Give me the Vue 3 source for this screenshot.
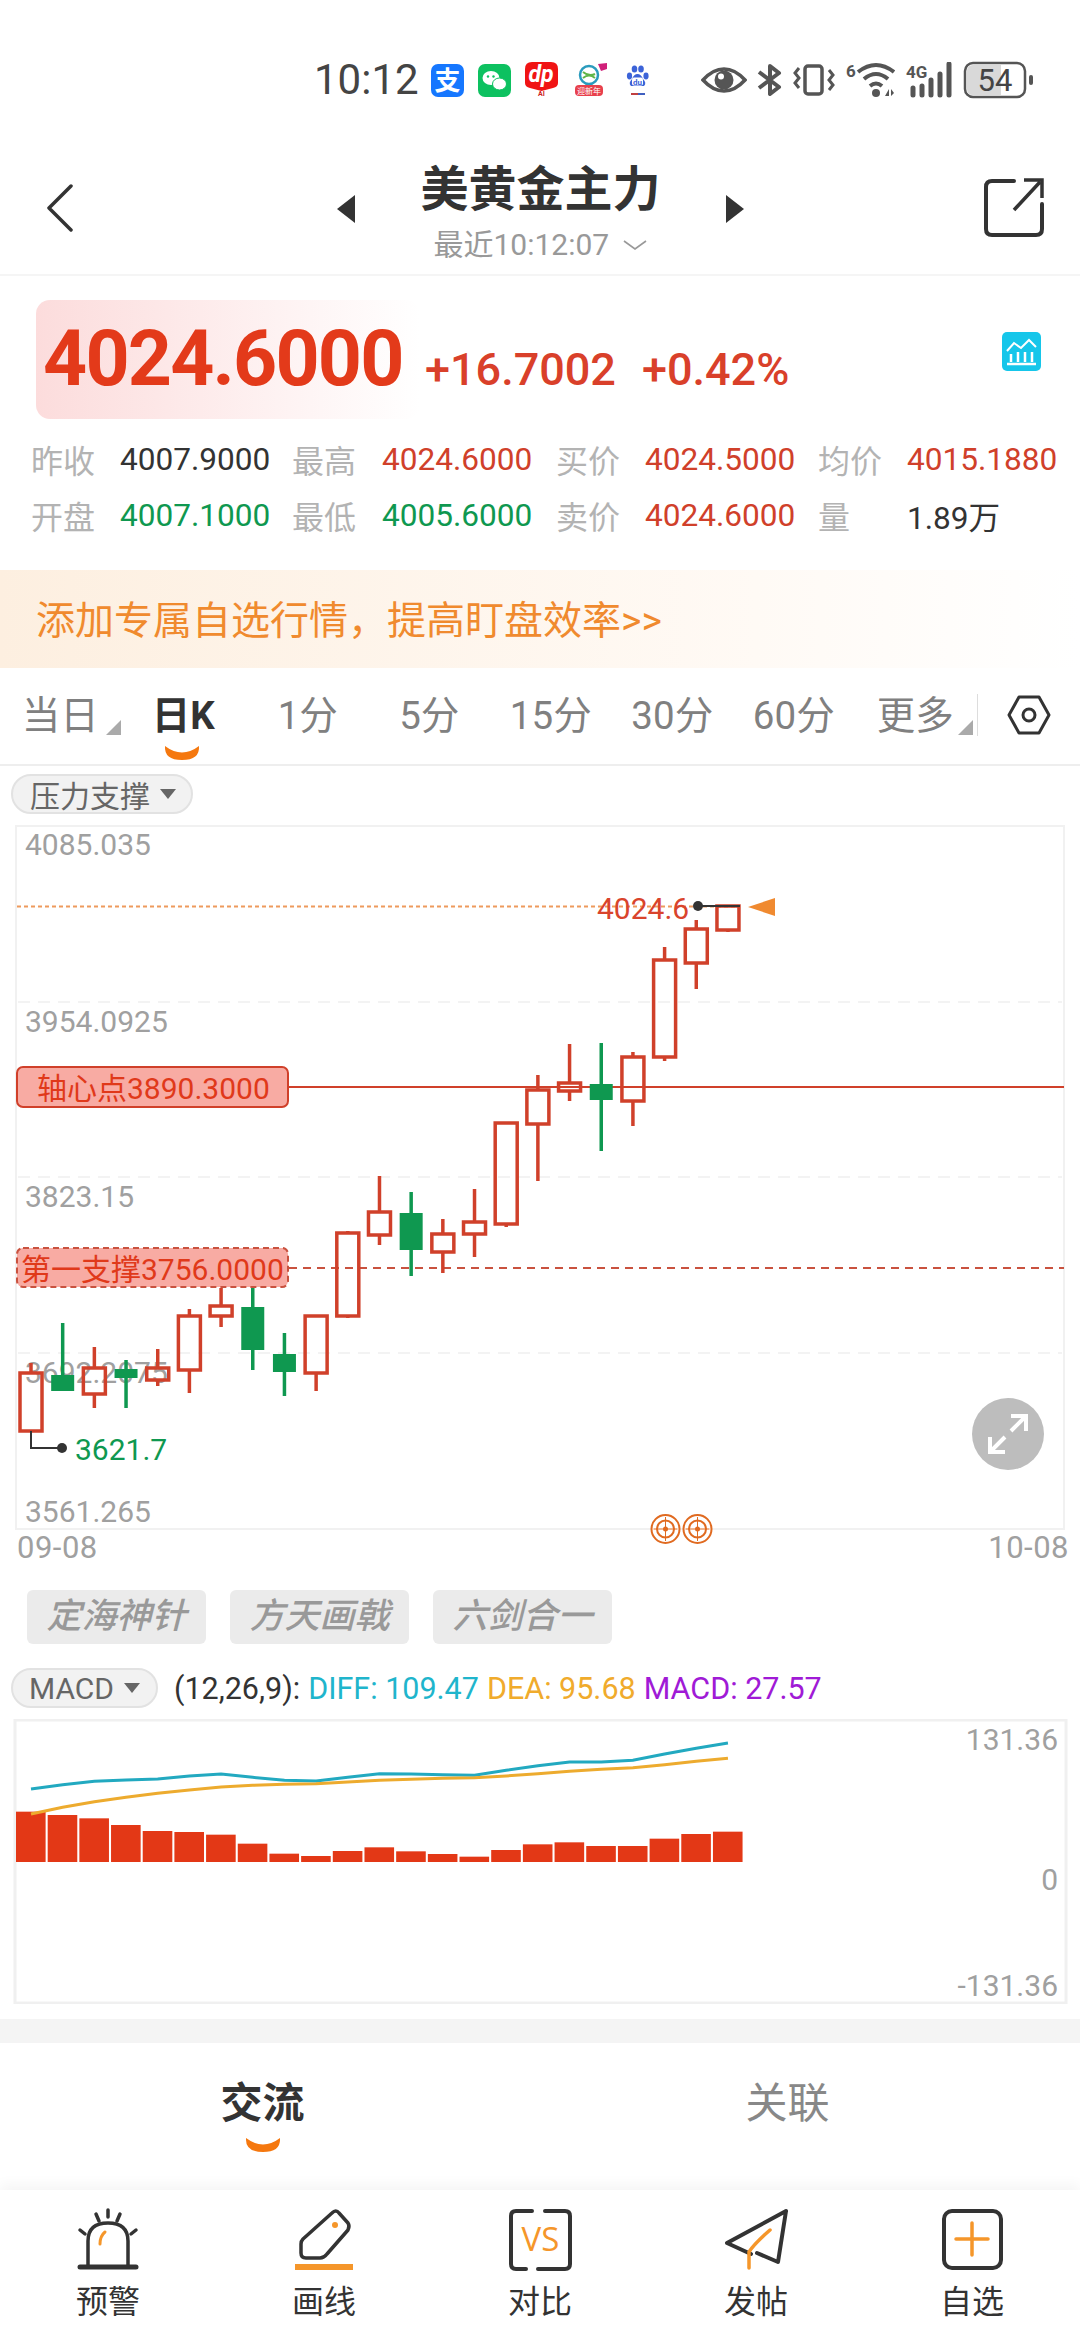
<template>
  <div class="page">
    <!-- status bar -->
    <div class="status">
      <span class="time">10:12</span>
      <svg class="app" width="33" height="33" viewBox="0 0 33 33">
        <rect width="33" height="33" rx="7" fill="#1677ff" />
        <text x="16.5" y="26" text-anchor="middle" font-size="26" font-weight="700" fill="#fff">支</text>
      </svg>
      <svg class="app app-gap" width="33" height="33" viewBox="0 0 33 33">
        <rect width="33" height="33" rx="7" fill="#0dc160" />
        <ellipse cx="13" cy="14" rx="8.5" ry="7" fill="#fff" />
        <ellipse cx="21.5" cy="20" rx="7" ry="6" fill="#fff" stroke="#0dc160" />
        <circle cx="10" cy="12.5" r="1.2" fill="#0dc160" />
        <circle cx="15.5" cy="12.5" r="1.2" fill="#0dc160" />
      </svg>
      <svg class="app app-gap" width="33" height="36" viewBox="0 0 33 36">
        <path d="M7 0H26Q33 0 33 7V21Q33 25 28 26L16.5 29L5 26Q0 25 0 21V7Q0 0 7 0Z" fill="#f01414" />
        <text x="16" y="20" text-anchor="middle" font-size="23" font-weight="700" font-style="italic" fill="#fff">dp</text>
        <text x="16.5" y="34" text-anchor="middle" font-size="7" font-weight="700" fill="#c22">AI</text>
      </svg>
      <svg class="app app-gap" width="36" height="34" viewBox="0 0 36 34">
        <circle cx="17" cy="12" r="9" fill="none" stroke="#2a9bbd" stroke-width="2.5" />
        <path d="M11 9Q17 14 23 11M11 15Q17 10 23 15" fill="none" stroke="#5fb548" stroke-width="2" />
        <path d="M26 1L35 0V6L29 8Z" fill="#d0207a" />
        <rect x="3" y="22" width="28" height="11" rx="4" fill="#e8404c" />
        <text x="17" y="31" text-anchor="middle" font-size="8" fill="#fff">迎新年</text>
      </svg>
      <svg class="app baidu" width="23" height="34" viewBox="0 0 23 34">
        <ellipse cx="3.5" cy="13" rx="2.6" ry="3.4" fill="#3c63d8" />
        <ellipse cx="8.5" cy="6" rx="2.8" ry="3.6" fill="#3c63d8" />
        <ellipse cx="15" cy="6" rx="2.8" ry="3.6" fill="#3c63d8" />
        <ellipse cx="20" cy="13" rx="2.6" ry="3.4" fill="#3c63d8" />
        <path d="M11.5 11Q15 11 17 16Q21 20 18 23H5Q2 20 6 16Q8 11 11.5 11Z" fill="#3c63d8" />
        <rect x="6" y="14.5" width="11" height="8" rx="2" fill="#fff" />
        <text x="11.5" y="21.5" text-anchor="middle" font-size="8" font-weight="700" fill="#3c63d8">du</text>
        <rect x="5" y="30" width="7" height="2" fill="#c04040" />
        <rect x="12" y="30" width="7" height="2" fill="#4060c0" />
      </svg>
      <div class="status-right">
        <svg width="46" height="26" viewBox="0 0 46 26">
          <path d="M2 13Q12 2 23 2T44 13Q34 24 23 24T2 13Z" fill="none" stroke="#555" stroke-width="3.5" />
          <circle cx="23" cy="13" r="9.5" fill="#555" />
          <circle cx="20" cy="9.5" r="3" fill="#fff" />
        </svg>
        <svg width="26" height="32" viewBox="0 0 26 32">
          <path d="M2 8L22 23L13 30V2L22 9L2 24" fill="none" stroke="#555" stroke-width="4" stroke-linejoin="round" />
        </svg>
        <svg width="42" height="32" viewBox="0 0 42 32">
          <rect x="12" y="2" width="17" height="28" rx="3" fill="none" stroke="#555" stroke-width="3.5" />
          <path d="M6 4L2 9L6 14L2 19L6 24M36 6L40 11L36 16L40 21L36 26" fill="none" stroke="#555" stroke-width="3" />
        </svg>
        <svg width="50" height="36" viewBox="0 0 50 36">
          <text x="1" y="15" font-size="17" font-weight="700" fill="#555">6</text>
          <path d="M13 10Q31 -4 49 10M19 17Q31 7 43 17M25 24Q31 19 37 24" fill="none" stroke="#555" stroke-width="4" />
          <circle cx="31" cy="31" r="4" fill="#555" />
          <path d="M40 34L44 27V34ZM46 27L49 31L46 34Z" fill="#555" />
        </svg>
        <svg width="48" height="36" viewBox="0 0 48 36">
          <text x="1" y="16" font-size="17" font-weight="700" fill="#555">4G</text>
          <path d="M8 26V33M17 24V33M26 18V33M35 12V33M44 2V33" fill="none" stroke="#555" stroke-width="5" stroke-linecap="round" />
        </svg>
        <svg width="72" height="38" viewBox="0 0 72 38">
          <rect x="2" y="2" width="60" height="34" rx="8" fill="#fff" stroke="#555" stroke-width="2.5" />
          <path d="M4 10Q4 4 10 4H38V34H10Q4 34 4 28Z" fill="#d9d9d9" />
          <text x="32" y="30" text-anchor="middle" font-size="31" fill="#444">54</text>
          <rect x="66" y="14" width="4" height="10" rx="2" fill="#555" />
        </svg>
      </div>
    </div>

    <!-- title bar -->
    <div class="header">
      <svg class="back" width="28" height="48" viewBox="0 0 28 48">
        <path d="M25 2L3 24L25 46" fill="none" stroke="#333" stroke-width="3.5" stroke-linecap="round" stroke-linejoin="round" />
      </svg>
      <div class="head-center">
        <svg width="18" height="28" viewBox="0 0 18 28"><path d="M18 0V28L0 14Z" fill="#333" /></svg>
        <div class="head-title">
          <div class="title">美黄金主力</div>
          <div class="sub">最近10:12:07
            <svg width="24" height="10" viewBox="0 0 24 10"><path d="M1 1L12 9L23 1" fill="none" stroke="#999" stroke-width="1.6" /></svg>
          </div>
        </div>
        <svg width="18" height="28" viewBox="0 0 18 28"><path d="M0 0V28L18 14Z" fill="#333" /></svg>
      </div>
      <svg class="share" width="60" height="60" viewBox="0 0 60 60">
        <path d="M30 3H8Q2 3 2 9V51Q2 57 8 57H52Q58 57 58 51V26" fill="none" stroke="#333" stroke-width="4" stroke-linecap="round" />
        <path d="M30 32L56 4M40 2H58V20" fill="none" stroke="#333" stroke-width="3.5" />
      </svg>
    </div>

    <!-- quote -->
    <div class="quote">
      <div class="price-row">
        <div class="price-box">
          <span class="price">4024.6000</span>
        </div>
        <span class="chg chg1">+16.7002</span>
        <span class="chg chg2">+0.42%</span>
        <svg class="trend" width="39" height="39" viewBox="0 0 39 39">
          <rect width="39" height="39" rx="5" fill="#16c6ea" />
          <path d="M5 19L12 11L19 16L27 8L34 15" fill="none" stroke="#fff" stroke-width="2" />
          <path d="M9 22V30M16 20V30M23 20V30M30 20V30M5 32H34" fill="none" stroke="#fff" stroke-width="2.5" />
        </svg>
      </div>
      <div class="grid">
        <template v-for="item in quoteCells" :key="item.label">
          <span class="q-label">{{ item.label }}</span>
          <span class="q-val" :class="item.tone">{{ item.value }}</span>
        </template>
      </div>
    </div>

    <div class="banner">添加专属自选行情，提高盯盘效率&gt;&gt;</div>

    <!-- period tabs -->
    <div class="tabs">
      <div v-for="tab in periods" :key="tab.text" class="tab" :class="{ on: tab.on, first: tab.first }">
        {{ tab.text }}
        <i v-if="tab.menu" class="corner"></i>
        <svg v-if="tab.on" class="smile" width="36" height="14" viewBox="0 0 36 14">
          <path :d="smilePath" fill="#f5780f" />
        </svg>
      </div>
      <div class="tab-sep"></div>
      <svg class="hex" width="44" height="40" viewBox="0 0 44 40">
        <path d="M12 2H32L42 20L32 38H12L2 20Z" fill="none" stroke="#333" stroke-width="3" stroke-linejoin="round" />
        <circle cx="22" cy="20" r="6" fill="none" stroke="#333" stroke-width="3" />
      </svg>
    </div>

    <div class="pill-row">
      <div class="pill">压力支撑<i class="down"></i></div>
    </div>

    <!-- kline -->
    <svg class="kline" width="1080" height="704" viewBox="0 826 1080 704">
      <rect x="16" y="826" width="1048" height="703" fill="#fff" stroke="#f1f1f1" stroke-width="2" />
      <line v-for="y in [1002, 1177, 1353]" :key="y" x1="18" x2="1062" :y1="y" :y2="y" stroke="#f3f3f3" stroke-width="2" stroke-dasharray="12 8" />
      <text v-for="a in axisLabels" :key="a.text" x="25" :y="a.y" class="axis">{{ a.text }}</text>

      <line x1="17" x2="740" y1="906.5" y2="906.5" stroke="#ee9a5c" stroke-width="2" stroke-dasharray="4 3" />
      <line x1="289" x2="1064" y1="1087" y2="1087" stroke="#d0402a" stroke-width="2" />
      <line x1="289" x2="1064" y1="1268" y2="1268" stroke="#c9523f" stroke-width="2" stroke-dasharray="8 6" />

      <g v-for="c in candles" :key="c.x">
        <line :x1="c.x" :x2="c.x" :y1="c.high" :y2="c.top" :stroke="c.color" stroke-width="3.5" />
        <line :x1="c.x" :x2="c.x" :y1="c.bottom" :y2="c.low" :stroke="c.color" stroke-width="3.5" />
        <rect v-if="c.up" :x="c.x - 11" :y="c.top" width="22" :height="c.bottom - c.top" fill="none" :stroke="c.color" stroke-width="3.5" />
        <rect v-else :x="c.x - 11.5" :y="c.top" width="23" :height="c.bottom - c.top" :fill="c.color" />
      </g>

      <rect x="17" y="1067" width="271" height="40" rx="6" fill="#f8aba3" stroke="#d0402a" stroke-width="2" />
      <text x="37" y="1099" class="mark">轴心点3890.3000</text>
      <rect x="17" y="1248" width="271" height="39" rx="6" fill="#f8aba3" stroke="#c9523f" stroke-width="2" stroke-dasharray="6 4" />
      <text x="21" y="1280" class="mark">第一支撑3756.0000</text>

      <path d="M31 1431V1448H62" fill="none" stroke="#333" stroke-width="2" />
      <circle cx="62" cy="1448" r="5" fill="#333" />
      <text x="75" y="1460" class="low">3621.7</text>

      <text x="597" y="919" class="high">4024.6</text>
      <line x1="698" x2="740" y1="906" y2="906" stroke="#333" stroke-width="2" />
      <circle cx="698" cy="906" r="5" fill="#333" />
      <path d="M748 907L775 898V916Z" fill="#f08a30" />

      <g v-for="cx in [665.5, 697.5]" :key="cx" fill="#fff" stroke="#e06a20">
        <circle :cx="cx" cy="1529" r="14" stroke-width="2" />
        <circle :cx="cx" cy="1529" r="8.5" fill="none" stroke-width="2" />
        <circle :cx="cx" cy="1529" r="2.5" fill="#e06a20" stroke="none" />
        <path :d="`M${cx} 1517V1541M${cx - 12} 1529H${cx + 12}`" fill="none" stroke-width="1" />
      </g>

      <ellipse cx="1008" cy="1434" rx="36" ry="36" fill="#bdbdbd" />
      <path d="M1011 1431L1026 1416M1011 1416H1026V1431M1005 1437L990 1452M990 1437V1452H1005" fill="none" stroke="#fff" stroke-width="4" />
    </svg>

    <div class="dates">
      <span>09-08</span>
      <span>10-08</span>
    </div>

    <div class="tools">
      <div v-for="t in tools" :key="t" class="tool">{{ t }}</div>
    </div>

    <div class="macd-row">
      <div class="pill macd-pill">MACD<i class="down"></i></div>
      <span class="legend">
        <span class="lg-param">(12,26,9):</span>
        <span class="lg-diff">DIFF: 109.47</span>
        <span class="lg-dea">DEA: 95.68</span>
        <span class="lg-macd">MACD: 27.57</span>
      </span>
    </div>

    <svg class="macd" width="1080" height="285" viewBox="0 1719 1080 285">
      <rect x="15" y="1720" width="1051" height="283" fill="#fff" stroke="#f0f0f0" stroke-width="3" />
      <rect v-for="b in bars" :key="b.x" :x="b.x" :y="b.y" width="29.6" :height="1862 - b.y" fill="#e33816" />
      <polyline :points="diffPoints" fill="none" stroke="#22a9c0" stroke-width="3" />
      <polyline :points="deaPoints" fill="none" stroke="#edab2e" stroke-width="3" />
      <text x="1058" y="1750" text-anchor="end" class="axis">131.36</text>
      <text x="1058" y="1890" text-anchor="end" class="axis">0</text>
      <text x="1058" y="1996" text-anchor="end" class="axis">-131.36</text>
    </svg>

    <div class="strip"></div>

    <div class="sub-tabs">
      <div class="sub-tab on">
        交流
        <svg class="smile" width="36" height="14" viewBox="0 0 36 14">
          <path :d="smilePath" fill="#f5780f" />
        </svg>
      </div>
      <div class="sub-tab">关联</div>
    </div>

    <!-- bottom nav -->
    <div class="nav">
      <div class="nav-item">
        <svg width="64" height="64" viewBox="0 0 64 64">
          <path d="M12 58V33Q12 15 32 15T52 33V58" fill="none" stroke="#333" stroke-width="3.5" />
          <path d="M4 59H60" stroke="#333" stroke-width="5" stroke-linecap="round" />
          <path d="M32 2V9M20 6L23 13M44 6L41 13M4 22L9 26M60 22L55 26" fill="none" stroke="#333" stroke-width="3.5" stroke-linecap="round" />
          <path d="M24 36Q24 28 29 24" fill="none" stroke="#f5962a" stroke-width="3" stroke-linecap="round" />
        </svg>
        <span>预警</span>
      </div>
      <div class="nav-item">
        <svg width="64" height="64" viewBox="0 0 64 64">
          <path d="M40 5Q44 1 47 5L56 15Q58 18 56 22L35 46Q32 50 28 50H14Q9 50 9 45V36Q9 33 11 31Z" fill="none" stroke="#333" stroke-width="3.5" stroke-linejoin="round" />
          <circle cx="43" cy="17" r="3" fill="#f5962a" />
          <path d="M3 59H61" stroke="#f5962a" stroke-width="6" />
        </svg>
        <span>画线</span>
      </div>
      <div class="nav-item">
        <svg width="64" height="64" viewBox="0 0 64 64">
          <path d="M24 3H8Q3 3 3 8V56Q3 61 8 61H18M37 3H57Q62 3 62 8V56Q62 61 57 61H30" fill="none" stroke="#333" stroke-width="4" stroke-linecap="round" />
          <text x="32.5" y="43" text-anchor="middle" font-size="33" fill="#f5962a" class="vs">VS</text>
        </svg>
        <span>对比</span>
      </div>
      <div class="nav-item">
        <svg width="64" height="64" viewBox="0 0 64 64">
          <path d="M62 3L3 35L27 46M62 3L54 54L33 45" fill="none" stroke="#333" stroke-width="4" stroke-linejoin="round" stroke-linecap="round" />
          <path d="M46 22Q30 36 25 44V60" fill="none" stroke="#f5962a" stroke-width="3.5" stroke-linecap="round" />
        </svg>
        <span>发帖</span>
      </div>
      <div class="nav-item">
        <svg width="64" height="64" viewBox="0 0 64 64">
          <rect x="4" y="3" width="57" height="57" rx="8" fill="none" stroke="#333" stroke-width="4" />
          <path d="M32 15V47M16 31H48" stroke="#f5962a" stroke-width="3.5" stroke-linecap="round" />
        </svg>
        <span>自选</span>
      </div>
    </div>
  </div>
</template>

<script setup>
const smilePath = 'M1 0Q18 13 35 0Q36 14 18 14Q0 14 1 0Z'

const quoteCells = [
  { label: '昨收', value: '4007.9000', tone: 'dark' },
  { label: '最高', value: '4024.6000', tone: 'red' },
  { label: '买价', value: '4024.5000', tone: 'red' },
  { label: '均价', value: '4015.1880', tone: 'red' },
  { label: '开盘', value: '4007.1000', tone: 'green' },
  { label: '最低', value: '4005.6000', tone: 'green' },
  { label: '卖价', value: '4024.6000', tone: 'red' },
  { label: '量', value: '1.89万', tone: 'dark' }
]

const periods = [
  { text: '当日', menu: true, first: true },
  { text: '日K', on: true },
  { text: '1分' },
  { text: '5分' },
  { text: '15分' },
  { text: '30分' },
  { text: '60分' },
  { text: '更多', menu: true }
]

const tools = ['定海神针', '方天画戟', '六剑合一']

const axisLabels = [
  { text: '4085.035', y: 855 },
  { text: '3954.0925', y: 1032 },
  { text: '3823.15', y: 1207 },
  { text: '3692.2075', y: 1383 },
  { text: '3561.265', y: 1522 }
]

const STEP = 31.68
const RED = '#d0402a'
const GREEN = '#0f9850'

// [涨?, 最高, 实体上, 实体下, 最低]
const raw = [
  [1, 1363, 1373, 1431, 1431],
  [0, 1323, 1375, 1391, 1391],
  [1, 1347, 1368, 1394, 1408],
  [0, 1360, 1369, 1378, 1408],
  [1, 1349, 1368, 1380, 1386],
  [1, 1309, 1316, 1370, 1393],
  [1, 1288, 1306, 1316, 1327],
  [0, 1284, 1307, 1350, 1370],
  [0, 1333, 1354, 1372, 1396],
  [1, 1316, 1316, 1373, 1391],
  [1, 1231, 1233, 1316, 1318],
  [1, 1176, 1212, 1235, 1245],
  [0, 1192, 1213, 1250, 1276],
  [1, 1219, 1234, 1252, 1273],
  [1, 1189, 1222, 1234, 1257],
  [1, 1123, 1123, 1224, 1227],
  [1, 1075, 1090, 1124, 1181],
  [1, 1044, 1083, 1091, 1101],
  [0, 1043, 1084, 1100, 1151],
  [1, 1052, 1057, 1101, 1126],
  [1, 947, 960, 1057, 1061],
  [1, 920, 929, 963, 989],
  [1, 906, 906, 930, 932]
]

const candles = raw.map((r, i) => ({
  x: 31 + STEP * i,
  up: r[0] === 1,
  color: r[0] === 1 ? RED : GREEN,
  high: r[1],
  top: r[2],
  bottom: r[3],
  low: r[4]
}))

const barTops = [365, 375, 385, 405, 423, 426, 434, 461, 491, 498, 483, 472, 484, 492, 500, 480, 463, 457, 468, 468, 446, 432, 425]
const bars = barTops.map((z, i) => ({ x: 16 + STEP * i, y: 1690 + z / 3 }))

const diff = [297, 284, 274, 270, 267, 258, 252, 262, 271, 273, 262, 251, 252, 254, 256, 241, 227, 216, 216, 211, 192, 175, 159]
const dea = [372, 352, 335, 322, 310, 300, 291, 286, 283, 281, 276, 271, 268, 265, 263, 258, 251, 244, 238, 233, 224, 214, 205]

function toPoints(list) {
  return list.map((z, i) => `${31 + STEP * i},${1690 + z / 3}`).join(' ')
}

const diffPoints = toPoints(diff)
const deaPoints = toPoints(dea)
</script>

<style>
html,
body {
  margin: 0;
  background: #fff;
}
</style>

<style scoped>
.page {
  width: 1080px;
  height: 2340px;
  overflow: hidden;
  background: #fff;
  font-family: Roboto, "Noto Sans CJK SC", sans-serif;
  color: #333;
}

svg {
  display: block;
  flex: none;
}

svg text {
  font-family: Roboto, "Noto Sans CJK SC", sans-serif;
}

.status {
  display: flex;
  align-items: center;
  height: 36px;
  padding: 62px 45px 32px 314px;
}

.time {
  font-size: 42px;
  color: #444;
  line-height: 36px;
  margin-right: 12px;
}

.app-gap {
  margin-left: 14px;
}

.baidu {
  margin-left: 18px;
}

.status-right {
  margin-left: auto;
  display: flex;
  align-items: center;
  gap: 10px;
}

.header {
  height: 132px;
  border-bottom: 2px solid #f5f5f5;
  display: flex;
  align-items: center;
  justify-content: space-between;
  padding: 12px 36px 0 46px;
  position: relative;
}

.head-center {
  position: absolute;
  left: 337px;
  width: 407px;
  top: 32px;
  display: flex;
  justify-content: space-between;
  align-items: flex-start;
}

.head-center > svg {
  margin-top: 33px;
}

.head-title {
  text-align: center;
}

.title {
  font-size: 48px;
  font-weight: 700;
  line-height: 56px;
  color: #333;
}

.sub {
  font-size: 30px;
  color: #999;
  line-height: 40px;
  margin-top: 7px;
  display: flex;
  align-items: center;
  gap: 14px;
  white-space: nowrap;
  margin-left: 13px;
  margin-right: -6px;
}

.quote {
  height: 294px;
  padding-top: 24px;
  box-sizing: border-box;
}

.price-row {
  display: flex;
  align-items: flex-end;
  position: relative;
  height: 119px;
  padding-left: 36px;
}

.price-box {
  width: 384px;
  height: 119px;
  border-radius: 14px;
  background: linear-gradient(90deg, #fcdcdc, #fff);
  display: flex;
  align-items: center;
  padding-left: 7px;
  box-sizing: border-box;
}

.price {
  font-size: 77px;
  font-weight: 700;
  color: #e33a1a;
  line-height: 1;
  letter-spacing: -1.8px;
  white-space: nowrap;
}

.chg {
  font-size: 45px;
  font-weight: 500;
  color: #d9402a;
  line-height: 1;
  padding-bottom: 27px;
  white-space: nowrap;
}

.chg1 {
  margin-left: 5px;
}

.chg2 {
  margin-left: 26px;
}

.trend {
  position: absolute;
  left: 1002px;
  top: 32px;
}

.grid {
  display: grid;
  grid-template-columns: 89px 172px 90px 174px 89px 173px 89px auto;
  grid-auto-rows: 56px;
  padding: 12px 0 0 31px;
  align-items: center;
}

.q-label {
  font-size: 32px;
  color: #b3b3b3;
}

.q-val {
  font-size: 31.6px;
  white-space: nowrap;
}

.q-val.red {
  color: #d0402a;
}

.q-val.green {
  color: #0f9850;
}

.q-val.dark {
  color: #333;
}

.banner {
  height: 98px;
  box-sizing: border-box;
  padding-left: 36px;
  line-height: 102px;
  font-size: 39px;
  color: #f08a2e;
  background: linear-gradient(90deg, #fdefe0, #fffaf5 70%, #fff);
  white-space: nowrap;
}

.tabs {
  height: 96px;
  border-bottom: 2px solid #eee;
  display: flex;
  align-items: center;
  padding-left: 4px;
  position: relative;
}

.tab {
  width: 121.5px;
  flex: none;
  box-sizing: border-box;
  text-align: center;
  font-size: 38.5px;
  line-height: 50px;
  color: #808080;
  position: relative;
}

.tab.first {
  padding-right: 9px;
}

.tab.on {
  color: #333;
  font-weight: 700;
  padding-right: 6px;
}

.tab .smile {
  position: absolute;
  left: 38px;
  top: 55px;
}

.corner {
  position: absolute;
  bottom: 6px;
  width: 0;
  height: 0;
  border-style: solid;
  border-width: 0 0 15px 15px;
  border-color: transparent transparent #aaa transparent;
  right: 3px;
}

.tab.first .corner {
  right: 5px;
}

.tab-sep {
  position: absolute;
  left: 977px;
  top: 26px;
  width: 1px;
  height: 42px;
  background: #ddd;
}

.hex {
  position: absolute;
  left: 1007px;
  top: 27px;
}

.pill-row {
  height: 60px;
  padding: 8px 0 0 11px;
  box-sizing: border-box;
}

.pill {
  display: inline-flex;
  align-items: center;
  height: 40px;
  box-sizing: border-box;
  padding: 0 15px 0 17px;
  border: 2px solid #e2e2e2;
  border-radius: 20px;
  background: #f2f2f2;
  font-size: 30px;
  color: #666;
  white-space: nowrap;
}

.down {
  margin-left: 10px;
  width: 0;
  height: 0;
  border-style: solid;
  border-width: 10px 8px 0;
  border-color: #666 transparent transparent;
}

.kline {
  overflow: visible;
}

.axis {
  font-size: 30px;
  fill: #a0a0a0;
}

.mark {
  font-size: 30px;
  fill: #e0391a;
}

.low {
  font-size: 30px;
  fill: #0f9850;
}

.high {
  font-size: 30px;
  fill: #d9442c;
}

.vs {
  font-family: "Open Sans", sans-serif;
}

.dates {
  height: 60px;
  display: flex;
  justify-content: space-between;
  padding: 0 11px 0 17px;
  font-size: 31px;
  letter-spacing: 0.5px;
  line-height: 35px;
  color: #a0a0a0;
}

.tools {
  display: flex;
  gap: 24px;
  padding-left: 27px;
}

.tool {
  width: 179px;
  height: 54px;
  border-radius: 6px;
  background: #ebebeb;
  text-align: center;
  line-height: 54px;
  font-size: 35px;
  font-weight: 500;
  font-style: italic;
  color: #999;
  white-space: nowrap;
}

.macd-row {
  display: flex;
  align-items: center;
  height: 40px;
  margin: 24px 0 11px;
  padding-left: 11px;
}

.macd-pill {
  width: 147px;
  justify-content: center;
  padding: 0;
}

.legend {
  margin-left: 16px;
  font-size: 30.5px;
  white-space: nowrap;
  display: flex;
  gap: 8px;
}

.lg-param {
  color: #333;
}

.lg-diff {
  color: #1fb5cc;
}

.lg-dea {
  color: #f0ab2c;
}

.lg-macd {
  color: #a01ad6;
}

.strip {
  height: 24px;
  margin-top: 15px;
  background: #f4f4f4;
}

.sub-tabs {
  height: 147px;
  display: flex;
  box-sizing: border-box;
  padding-top: 33px;
}

.sub-tab {
  width: 525px;
  flex: none;
  text-align: center;
  font-size: 42px;
  line-height: 56px;
  color: #888;
  position: relative;
}

.sub-tab.on {
  color: #333;
  font-weight: 700;
}

.sub-tab .smile {
  position: absolute;
  left: 245px;
  top: 62px;
}

.nav {
  height: 150px;
  display: grid;
  grid-template-columns: repeat(5, 216px);
  box-shadow: 0 -6px 12px rgba(0, 0, 0, 0.04);
  position: relative;
  background: #fff;
  box-sizing: border-box;
  padding-top: 18px;
}

.nav-item {
  display: flex;
  flex-direction: column;
  align-items: center;
  font-size: 32px;
  line-height: 44px;
  color: #333;
}

.nav-item span {
  margin-top: 8px;
}
</style>
